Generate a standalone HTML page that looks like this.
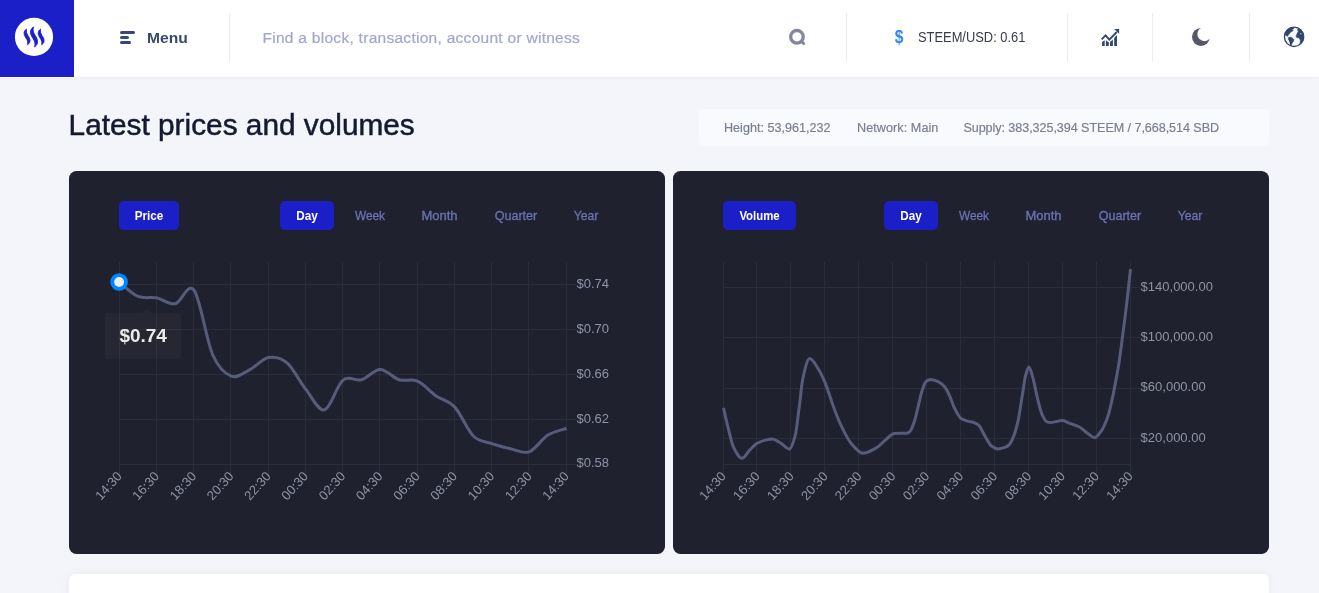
<!DOCTYPE html>
<html>
<head>
<meta charset="utf-8">
<title>Latest prices and volumes</title>
<style>
*{box-sizing:border-box;margin:0;padding:0}
html,body{width:1319px;height:593px;overflow:hidden}
body{background:#f4f5fa;font-family:"Liberation Sans",sans-serif;position:relative;color:#151a30}
.abs{position:absolute}
.header{position:absolute;left:0;top:0;width:1319px;height:77px;background:#fff;box-shadow:0 1px 5px rgba(30,40,90,0.035)}
.logo{position:absolute;left:0;top:0;width:74px;height:77px;background:#1a1fc8}
.vdiv{position:absolute;top:13px;height:48px;width:1px;background:#ebecf1}
.menu{position:absolute;left:146.8px;top:28.5px;transform:scaleX(1.02);transform-origin:0 50%;font-size:15.3px;font-weight:bold;color:#354a70;line-height:18px;white-space:nowrap}
.search{position:absolute;left:262.5px;top:29px;font-size:15.5px;letter-spacing:0.28px;-webkit-text-stroke:0.2px #a0a6cf;color:#a0a6cf;line-height:18px;white-space:nowrap}
.rate{position:absolute;left:918px;top:28.3px;font-size:14px;transform:scaleX(0.92);transform-origin:0 50%;color:#383c4a;line-height:18px;white-space:nowrap}
.dollar{position:absolute;left:894.2px;top:25.7px;transform:scaleX(0.87);transform-origin:50% 50%;font-size:18px;font-weight:bold;color:#2f86f6;line-height:22px}
h1{position:absolute;left:68.6px;top:108.2px;font-size:29.8px;font-weight:normal;line-height:34px;color:#151a30;white-space:nowrap;-webkit-text-stroke:0.5px #151a30}
.info{position:absolute;left:699px;top:109px;width:570px;height:37px;background:#f9fafd;border-radius:5px}
.info span{position:absolute;top:11px;-webkit-text-stroke:0.2px #7b7f93;font-size:12.6px;line-height:16px;color:#7b7f93;white-space:nowrap}
.card{position:absolute;top:171px;width:596px;height:382.5px;background:#20212e;border-radius:7.5px}
.btn{position:absolute;top:201px;height:29px;border-radius:5px;background:#1a1fc8}
.bt{position:absolute;top:208px;transform:scaleX(0.9);font-size:13px;line-height:16px;font-weight:bold;color:#fff;white-space:nowrap;text-align:center}
.tab{position:absolute;top:208px;font-size:13px;line-height:16px;color:#6c73b6;-webkit-text-stroke:0.3px #6c73b6;white-space:nowrap;text-align:center}
.white{position:absolute;left:69px;top:574px;width:1200px;height:40px;background:#fff;border-radius:6px;box-shadow:0 0 8px rgba(120,130,170,0.08)}
.tip{position:absolute;left:105px;top:313px;width:76px;height:46px;background:rgba(255,255,255,0.032);border-radius:3px}
.tip:before{content:"";position:absolute;left:37px;top:-4px;border-left:5px solid transparent;border-right:5px solid transparent;border-bottom:4px solid rgba(255,255,255,0.032)}
.tipt{position:absolute;left:119.4px;top:323.5px;font-size:19px;line-height:24px;font-weight:bold;color:#ebebee;white-space:nowrap}
</style>
</head>
<body>
<div id="wrap" style="position:absolute;left:0;top:0;width:1319px;height:593px;will-change:transform">
<div class="header">
  <div class="abs" style="left:0;top:77px;width:74px;height:1px;background:#fdfdfe"></div>
  <div class="logo">
    <svg class="abs" style="left:0;top:0" width="74" height="77" viewBox="0 0 74 77">
      <circle cx="34" cy="36.9" r="19.1" fill="#fff"/>
      <g fill="#1a1fc8" stroke="#1a1fc8" stroke-width="0.9" stroke-linejoin="round">
        <path d="M26.50 29.10C22.90 31.60 23.90 35.03 26.10 38.15C27.70 40.49 28.10 42.52 27.60 44.70C31.20 42.20 30.20 38.77 28.00 35.65C26.40 33.31 26.00 31.28 26.50 29.10z"/>
        <path d="M33.50 26.90C29.00 30.10 30.25 34.50 33.00 38.50C35.00 41.50 35.50 44.10 34.60 46.90C39.10 43.70 37.85 39.30 35.10 35.30C33.10 32.30 32.60 29.70 33.50 26.90z"/>
        <path d="M40.60 29.10C37.00 31.60 38.00 35.03 40.20 38.15C41.80 40.49 42.20 42.52 41.70 44.70C45.30 42.20 44.30 38.77 42.10 35.65C40.50 33.31 40.10 31.28 40.60 29.10z"/>
      </g>
    </svg>
  </div>
  <svg class="abs" style="left:118px;top:29px" width="20" height="17" viewBox="118 29 20 17">
    <g fill="#354a70">
      <rect x="120" y="31" width="15" height="3" rx="1.5"/>
      <rect x="120" y="36" width="9" height="3" rx="1.5"/>
      <rect x="120" y="41" width="11" height="3" rx="1.5"/>
    </g>
  </svg>
  <div class="menu">Menu</div>
  <div class="vdiv" style="left:229px"></div>
  <div class="search">Find a block, transaction, account or witness</div>
  <svg class="abs" style="left:786px;top:27px" width="22" height="22" viewBox="786 27 22 22">
    <circle cx="796.95" cy="36.8" r="6.3" fill="none" stroke="#83889f" stroke-width="3.3"/>
    <path d="M801.6 41.5l2 2" stroke="#83889f" stroke-width="3" stroke-linecap="round" fill="none"/>
  </svg>
  <div class="vdiv" style="left:846px"></div>
  <div class="dollar">$</div>
  <div class="rate">STEEM/USD: 0.61</div>
  <div class="vdiv" style="left:1067px"></div>
  <svg class="abs" style="left:1098px;top:26px" width="24" height="22" viewBox="1098 26 24 22">
    <g fill="#2f466f">
      <path d="M1102.100 46v-3.900l2.600-1.800v5.700z"/>
      <path d="M1105.900 46v-5.900l1.400 1.500 1.500 0.300v4.100z"/>
      <path d="M1110 46v-4.100l2.900-2.400v6.500z"/>
      <path d="M1114.200 46v-8.300l2.800-2.700v11z"/>
    </g>
    <path d="M1101.600 39.300l4-4 3.700 4.300 7.500-7.600" fill="none" stroke="#2f466f" stroke-width="1.800"/>
    <path d="M1114.200 28.900h4.900v4.900z" fill="#2f466f"/>
  </svg>
  <div class="vdiv" style="left:1152px"></div>
  <svg class="abs" style="left:1188px;top:25px" width="26" height="24" viewBox="1188 25 26 24">
    <circle cx="1200.93" cy="36.93" r="8.95" fill="#555869"/><circle cx="1204.5" cy="34.05" r="7.15" fill="#fff"/>
  </svg>
  <div class="vdiv" style="left:1249px"></div>
  <svg class="abs" style="left:1282px;top:25px" width="25" height="24" viewBox="1282 25 25 24">
    <defs><clipPath id="gc"><circle cx="1294.05" cy="36.8" r="9.8"/></clipPath></defs>
    <circle cx="1294.05" cy="36.8" r="9.65" fill="#fff" stroke="#2f466f" stroke-width="1.4"/>
    <g clip-path="url(#gc)" fill="#2f466f" stroke="#2f466f" stroke-width="0.5" stroke-linejoin="round">
      <polygon points="1284.3,35.9 1284.9,31.8 1287.6,28.8 1291.7,27.0 1294.1,27.0 1293.8,28.8 1292.0,29.4 1293.2,30.6 1291.7,31.8 1290.5,32.1 1289.5,33.9 1288.2,34.7 1288.0,36.4 1286.7,35.8 1285.5,35.0"/>
      <polygon points="1288.3,37.7 1289.6,37.1 1291.2,37.2 1292.8,38.4 1293.9,39.5 1293.6,41.2 1292.4,42.7 1291.7,44.2 1291.1,46.0 1290.2,45.1 1289.8,42.4 1289.0,40.4 1288.3,39.2"/>
      <polygon points="1297.9,27.1 1298.8,28.8 1297.3,29.7 1298.3,31.2 1297.5,32.7 1296.7,34.5 1296.0,35.9 1296.7,37.5 1298.8,38.0 1300.0,39.2 1300.4,41.2 1299.8,43.9 1301.1,44.8 1303.5,41.8 1304.7,37.1 1304.1,32.4 1302.3,28.8 1300.0,27.0"/>
    </g>
    <circle cx="1300.8" cy="33.7" r="0.6" fill="#dfe3ea"/>
  </svg>
</div>

<h1>Latest prices and volumes</h1>
<div class="info">
  <span style="left:25px">Height: 53,961,232</span>
  <span style="left:158px;letter-spacing:0.07px">Network: Main</span>
  <span style="left:264.4px;letter-spacing:-0.066px">Supply: 383,325,394 STEEM / 7,668,514 SBD</span>
</div>

<div class="card" style="left:69px"></div>
<div class="card" style="left:673px"></div>

<div class="btn" style="left:119px;width:60px"></div>
<div class="bt" style="left:119px;width:60px">Price</div>
<div class="btn" style="left:280px;width:54px"></div>
<div class="bt" style="left:280px;width:54px">Day</div>
<div class="tab" style="left:340px;width:60px;transform:scaleX(0.91)">Week</div>
<div class="tab" style="left:409.500px;width:60px">Month</div>
<div class="tab" style="left:485.800px;width:60px;transform:scaleX(0.965)">Quarter</div>
<div class="tab" style="left:556.300px;width:60px;transform:scaleX(0.94)">Year</div>

<div class="btn" style="left:723px;width:73px"></div>
<div class="bt" style="left:723px;width:73px;transform:scaleX(0.875)">Volume</div>
<div class="btn" style="left:884px;width:54px"></div>
<div class="bt" style="left:884px;width:54px">Day</div>
<div class="tab" style="left:944px;width:60px;transform:scaleX(0.91)">Week</div>
<div class="tab" style="left:1013.500px;width:60px">Month</div>
<div class="tab" style="left:1089.800px;width:60px;transform:scaleX(0.965)">Quarter</div>
<div class="tab" style="left:1160.300px;width:60px;transform:scaleX(0.94)">Year</div>

<svg class="abs" style="left:0;top:0" width="1319" height="593" viewBox="0 0 1319 593">
<g stroke="#2b2d3b" stroke-width="1" fill="none" shape-rendering="crispEdges">
<line x1="119.5" y1="262" x2="119.5" y2="474"/>
<line x1="156.5" y1="262" x2="156.5" y2="474"/>
<line x1="193.5" y1="262" x2="193.5" y2="474"/>
<line x1="230.5" y1="262" x2="230.5" y2="474"/>
<line x1="268.5" y1="262" x2="268.5" y2="474"/>
<line x1="305.5" y1="262" x2="305.5" y2="474"/>
<line x1="342.5" y1="262" x2="342.5" y2="474"/>
<line x1="379.5" y1="262" x2="379.5" y2="474"/>
<line x1="417.5" y1="262" x2="417.5" y2="474"/>
<line x1="454.5" y1="262" x2="454.5" y2="474"/>
<line x1="491.5" y1="262" x2="491.5" y2="474"/>
<line x1="528.5" y1="262" x2="528.5" y2="474"/>
<line x1="566.5" y1="262" x2="566.5" y2="474"/>
<line x1="119.5" y1="284.5" x2="575.5" y2="284.5"/>
<line x1="119.5" y1="329.5" x2="575.5" y2="329.5"/>
<line x1="119.5" y1="374.5" x2="575.5" y2="374.5"/>
<line x1="119.5" y1="419.5" x2="575.5" y2="419.5"/>
<line x1="119.5" y1="464.5" x2="566.5" y2="464.5"/>
</g>
<path d="M119.5 282.4C122.6 284.7 131.9 293.8 138.1 296.4C144.3 299.0 150.5 296.7 156.8 297.9C163.0 299.1 169.2 305.0 175.4 303.7C181.6 302.4 187.8 281.7 194.0 290.2C200.2 298.7 206.4 340.2 212.6 354.5C218.8 368.8 225.0 373.7 231.2 376.2C237.5 378.7 243.7 372.7 249.9 369.6C256.1 366.5 262.3 358.6 268.5 357.5C274.7 356.4 280.9 357.6 287.1 362.9C293.3 368.2 299.5 381.5 305.8 389.3C312.0 397.1 318.2 411.3 324.4 409.8C330.6 408.3 336.8 385.1 343.0 380.1C349.2 375.1 355.4 381.5 361.6 379.7C367.8 377.9 374.0 369.4 380.2 369.4C386.5 369.4 392.7 377.7 398.9 379.7C405.1 381.7 411.3 378.5 417.5 381.2C423.7 383.9 429.9 391.6 436.1 395.9C442.3 400.2 448.5 400.4 454.8 407.1C461.0 413.8 467.2 429.9 473.4 436.0C479.6 442.1 485.8 441.5 492.0 443.6C498.2 445.7 504.4 447.4 510.6 448.8C516.8 450.2 523.0 454.1 529.2 451.8C535.5 449.5 541.7 439.0 547.9 435.1C554.1 431.2 563.4 429.5 566.5 428.4" fill="none" stroke="#575c7b" stroke-width="3" stroke-linecap="butt" stroke-linejoin="round"/>
<g font-family="Liberation Sans, sans-serif" font-size="13" fill="#8f93a7">
<text x="576.5" y="287.6">$0.74</text>
<text x="576.5" y="332.6">$0.70</text>
<text x="576.5" y="377.6">$0.66</text>
<text x="576.5" y="422.6">$0.62</text>
<text x="122.7" y="476.7" text-anchor="end" transform="rotate(-48 122.7 476.7)">14:30</text>
<text x="159.9" y="476.7" text-anchor="end" transform="rotate(-48 159.9 476.7)">16:30</text>
<text x="197.2" y="476.7" text-anchor="end" transform="rotate(-48 197.2 476.7)">18:30</text>
<text x="234.4" y="476.7" text-anchor="end" transform="rotate(-48 234.4 476.7)">20:30</text>
<text x="271.7" y="476.7" text-anchor="end" transform="rotate(-48 271.7 476.7)">22:30</text>
<text x="308.9" y="476.7" text-anchor="end" transform="rotate(-48 308.9 476.7)">00:30</text>
<text x="346.2" y="476.7" text-anchor="end" transform="rotate(-48 346.2 476.7)">02:30</text>
<text x="383.4" y="476.7" text-anchor="end" transform="rotate(-48 383.4 476.7)">04:30</text>
<text x="420.7" y="476.7" text-anchor="end" transform="rotate(-48 420.7 476.7)">06:30</text>
<text x="457.9" y="476.7" text-anchor="end" transform="rotate(-48 457.9 476.7)">08:30</text>
<text x="495.2" y="476.7" text-anchor="end" transform="rotate(-48 495.2 476.7)">10:30</text>
<text x="532.5" y="476.7" text-anchor="end" transform="rotate(-48 532.5 476.7)">12:30</text>
<text x="569.7" y="476.7" text-anchor="end" transform="rotate(-48 569.7 476.7)">14:30</text>
</g>
<line x1="566" y1="464.5" x2="575.5" y2="464.5" stroke="#2b2d3b" stroke-width="1" shape-rendering="crispEdges"/>
<text x="576.5" y="467.1" font-family="Liberation Sans, sans-serif" font-size="13" fill="#8f93a7">$0.58</text>
<g stroke="#2b2d3b" stroke-width="1" fill="none" shape-rendering="crispEdges">
<line x1="723.5" y1="262" x2="723.5" y2="474"/>
<line x1="756.5" y1="262" x2="756.5" y2="474"/>
<line x1="790.5" y1="262" x2="790.5" y2="474"/>
<line x1="824.5" y1="262" x2="824.5" y2="474"/>
<line x1="858.5" y1="262" x2="858.5" y2="474"/>
<line x1="892.5" y1="262" x2="892.5" y2="474"/>
<line x1="926.5" y1="262" x2="926.5" y2="474"/>
<line x1="960.5" y1="262" x2="960.5" y2="474"/>
<line x1="994.5" y1="262" x2="994.5" y2="474"/>
<line x1="1028.5" y1="262" x2="1028.5" y2="474"/>
<line x1="1062.5" y1="262" x2="1062.5" y2="474"/>
<line x1="1096.5" y1="262" x2="1096.5" y2="474"/>
<line x1="1130.5" y1="262" x2="1130.5" y2="474"/>
<line x1="723.5" y1="287.5" x2="1139.5" y2="287.5"/>
<line x1="723.5" y1="337.8" x2="1139.5" y2="337.8"/>
<line x1="723.5" y1="388.2" x2="1139.5" y2="388.2"/>
<line x1="723.5" y1="438.5" x2="1139.5" y2="438.5"/>
<line x1="723.5" y1="464.5" x2="1130.5" y2="464.5"/>
</g>
<path d="M723.5 407.9C725.0 414.5 726.6 421.7 728.1 427.7C729.9 434.9 731.8 443.8 733.6 447.4C736.4 452.9 739.2 458.3 742.0 458.3C744.7 458.3 747.4 452.2 750.1 449.6C752.6 447.2 755.2 444.3 757.7 443.0C760.3 441.7 762.8 440.7 765.4 440.1C767.6 439.6 769.8 439.0 772.0 439.0C774.9 439.0 777.8 441.4 780.7 443.0C783.6 444.6 786.6 449.1 789.5 449.1C791.3 449.1 793.2 442.9 795.0 436.4C796.5 431.2 797.9 416.6 799.4 405.7C800.5 397.5 801.6 384.4 802.7 379.4C805.0 368.7 807.4 358.6 809.7 358.6C812.5 358.6 815.2 364.3 818.0 368.5C820.2 371.8 822.4 376.5 824.6 381.6C828.2 389.9 831.9 403.1 835.5 412.3C837.7 417.9 839.9 423.3 842.1 427.7C845.0 433.6 848.0 439.6 850.9 443.0C854.9 447.7 858.9 453.3 862.9 453.3C867.4 453.3 872.0 450.4 876.5 447.8C879.6 446.0 882.8 442.2 885.9 439.7C888.6 437.5 891.4 433.6 894.1 433.5C898.4 433.3 902.7 433.4 907.0 433.2C908.0 433.1 909.1 432.3 910.1 431.3C911.6 429.9 913.1 425.2 914.6 420.7C915.9 416.9 917.1 410.6 918.4 405.5C919.7 400.4 920.9 393.9 922.2 390.3C923.6 386.4 924.9 382.2 926.3 381.2C927.7 380.2 929.2 379.4 930.6 379.4C933.4 379.4 936.1 380.7 938.9 382.0C940.9 383.0 943.0 384.8 945.0 387.3C946.5 389.1 948.0 392.5 949.5 395.7C951.1 399.1 952.6 404.4 954.2 407.5C956.5 412.0 958.7 416.9 961.0 418.4C963.2 419.8 965.4 420.5 967.6 421.1C969.4 421.6 971.3 421.7 973.1 422.2C974.9 422.7 976.7 423.6 978.5 425.0C980.7 426.7 982.9 432.9 985.1 436.4C987.3 439.9 989.5 444.9 991.7 446.3C993.7 447.6 995.8 448.9 997.8 448.9C1000.1 448.9 1002.5 448.2 1004.8 447.4C1006.3 446.9 1007.7 446.1 1009.2 444.7C1010.7 443.3 1012.1 440.0 1013.6 436.4C1015.1 432.8 1016.5 427.5 1018.0 421.1C1019.5 414.7 1020.9 403.6 1022.4 394.8C1023.5 388.2 1024.6 379.0 1025.7 375.1C1026.8 371.3 1027.8 367.0 1028.9 367.0C1030.0 367.0 1031.1 371.7 1032.2 375.1C1034.0 380.7 1035.9 392.1 1037.7 399.2C1039.2 404.9 1040.6 411.3 1042.1 414.5C1043.6 417.7 1045.0 420.7 1046.5 421.5C1047.6 422.1 1048.7 422.6 1049.8 422.6C1054.0 422.6 1058.3 420.6 1062.5 420.6C1064.5 420.6 1066.4 422.1 1068.4 422.8C1072.1 424.2 1075.7 425.1 1079.4 427.0C1082.3 428.5 1085.2 431.9 1088.1 433.8C1090.3 435.3 1092.5 437.7 1094.7 437.7C1096.9 437.7 1099.1 434.0 1101.3 430.9C1103.5 427.9 1105.6 422.9 1107.8 416.7C1109.3 412.5 1110.7 405.8 1112.2 399.2C1112.9 395.9 1113.7 392.0 1114.4 388.2C1115.9 380.6 1117.3 373.4 1118.8 364.1C1119.9 356.9 1121.1 347.6 1122.2 339.0C1123.7 327.6 1125.2 316.3 1126.7 303.6C1128.0 292.9 1129.2 280.7 1130.5 269.2" fill="none" stroke="#575c7b" stroke-width="3" stroke-linecap="butt" stroke-linejoin="round"/>
<g font-family="Liberation Sans, sans-serif" font-size="13" fill="#8f93a7">
<text x="1140.6" y="290.6">$140,000.00</text>
<text x="1140.6" y="340.9">$100,000.00</text>
<text x="1140.6" y="391.3">$60,000.00</text>
<text x="1140.6" y="441.6">$20,000.00</text>
<text x="726.7" y="476.7" text-anchor="end" transform="rotate(-48 726.7 476.7)">14:30</text>
<text x="760.6" y="476.7" text-anchor="end" transform="rotate(-48 760.6 476.7)">16:30</text>
<text x="794.5" y="476.7" text-anchor="end" transform="rotate(-48 794.5 476.7)">18:30</text>
<text x="828.5" y="476.7" text-anchor="end" transform="rotate(-48 828.5 476.7)">20:30</text>
<text x="862.4" y="476.7" text-anchor="end" transform="rotate(-48 862.4 476.7)">22:30</text>
<text x="896.3" y="476.7" text-anchor="end" transform="rotate(-48 896.3 476.7)">00:30</text>
<text x="930.2" y="476.7" text-anchor="end" transform="rotate(-48 930.2 476.7)">02:30</text>
<text x="964.1" y="476.7" text-anchor="end" transform="rotate(-48 964.1 476.7)">04:30</text>
<text x="998.0" y="476.7" text-anchor="end" transform="rotate(-48 998.0 476.7)">06:30</text>
<text x="1032.0" y="476.7" text-anchor="end" transform="rotate(-48 1032.0 476.7)">08:30</text>
<text x="1065.9" y="476.7" text-anchor="end" transform="rotate(-48 1065.9 476.7)">10:30</text>
<text x="1099.8" y="476.7" text-anchor="end" transform="rotate(-48 1099.8 476.7)">12:30</text>
<text x="1133.7" y="476.7" text-anchor="end" transform="rotate(-48 1133.7 476.7)">14:30</text>
</g>
</svg>

<div class="tip"></div>
<div class="tipt">$0.74</div>
<svg class="abs" style="left:105px;top:268px" width="30" height="30" viewBox="105 268 30 30">
  <circle cx="119.1" cy="282.0" r="6.9" fill="#eeeeee" stroke="#0084ff" stroke-width="3.9"/>
</svg>

<div class="white"></div>
</div>
</body>
</html>
